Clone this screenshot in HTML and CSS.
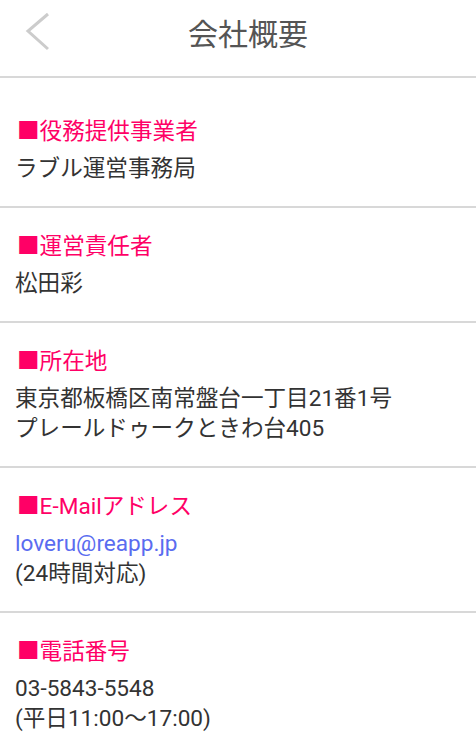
FILE: index.html
```html
<!DOCTYPE html>
<html lang="ja">
<head>
    <meta charset="UTF-8">
    <meta name="viewport" content="width=device-width, initial-scale=1.0">
    <title>会社概要</title>
    <link rel="stylesheet" href="styles.css">
</head>
<body>
    <header class="top-bar">
        <a class="back-btn" href="#">
            <svg width="26" height="40" viewBox="0 0 26 40">
                <polyline points="23,2 3,19 23,37" fill="none" stroke="#cccccc" stroke-width="3"/>
            </svg>
        </a>
        <h1>会社概要</h1>
    </header>

    <div class="info-list">
        <div class="info-item">
            <div class="label">■役務提供事業者</div>
            <div class="value">ラブル運営事務局</div>
        </div>
        <div class="info-item">
            <div class="label">■運営責任者</div>
            <div class="value">松田彩</div>
        </div>
        <div class="info-item">
            <div class="label">■所在地</div>
            <div class="value">東京都板橋区南常盤台一丁目21番1号<br>プレールドゥークときわ台405</div>
        </div>
        <div class="info-item">
            <div class="label">■E-Mailアドレス</div>
            <div class="value"><a href="#" class="mail">loveru@reapp.jp</a><br>(24時間対応)</div>
        </div>
        <div class="info-item">
            <div class="label">■電話番号</div>
            <div class="value">03-5843-5548<br>(平日11:00〜17:00)</div>
        </div>
    </div>
</body>
</html>
```

FILE: styles.css
```css
:root {
    --pink: #ff0066;
    --line: #d8d8d8;
    --text: #333333;
}

body {
    margin: 0;
    background: #ffffff;
    font-family: Roboto, "Noto Sans CJK JP", sans-serif;
    color: var(--text);
}

.top-bar {
    position: relative;
    height: 76px;
    display: flex;
    align-items: center;
    justify-content: center;
    border-bottom: 2px solid var(--line);
}

.top-bar h1 {
    margin: 0;
    padding: 0 0 12px 20px;
    font-size: 30px;
    font-weight: normal;
    color: #555555;
}

.back-btn {
    position: absolute;
    left: 25px;
    top: 12px;
    display: block;
}

.info-list {
    padding-top: 15px;
}

.info-item {
    padding: 22px 15px 22px;
    border-bottom: 2px solid var(--line);
}

.label {
    color: var(--pink);
    font-size: 22.6px;
    line-height: 30px;
    margin-bottom: 7px;
    padding: 2px 0 0 2px;
}

.value {
    font-size: 22.6px;
    line-height: 30px;
}

.mail {
    color: #5a6cf0;
    text-decoration: none;
}
```
